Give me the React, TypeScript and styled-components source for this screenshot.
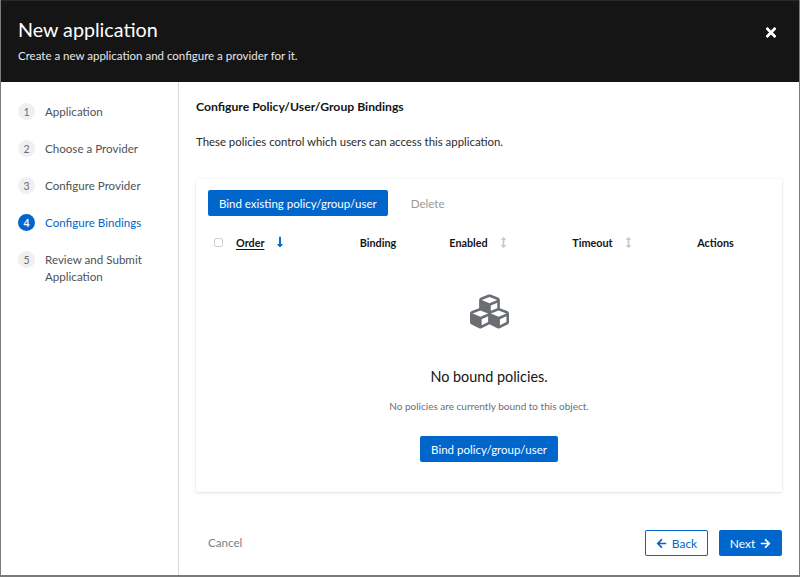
import React from "react";
import styled, { createGlobalStyle } from "styled-components";
import { FaArrowLeft, FaArrowRight, FaTimes, FaCubes, FaLongArrowAltDown, FaArrowsAltV } from "react-icons/fa";

const Global = createGlobalStyle`
  html, body { margin: 0; padding: 0; background: #fff; }
  #root { width: 800px; height: 577px; overflow: hidden; }
  * { box-sizing: border-box; }
  body { font-family: "Lato", "Liberation Sans", sans-serif; color: #151515; }
`;

const Modal = styled.div`
  width: 800px; height: 577px; display: flex; flex-direction: column;
  background: #fff; border: solid #7a7a7a; border-width: 0 1px 2px 1px;
`;
const Header = styled.header`
  height: 82px; flex: none; background: #151515; color: #fff; position: relative;
  padding: 17px 17px 0; border-top: 1px solid #2a2a2a;
`;
const Title = styled.h1`
  margin: 0; font-size: 19.7px; line-height: 24px; font-weight: 400;
`;
const Subtitle = styled.p`
  margin: 6px 0 0; font-size: 11.5px; line-height: 16px; color: #e8e8e8;
`;
const Close = styled.button`
  position: absolute; right: 21px; top: 24px; width: 14px; height: 14px; padding: 0;
  border: 0; background: none; color: #fff; display: flex; align-items: center; justify-content: center;
  font-size: 15px;
`;
const Body = styled.div`
  flex: 1; display: flex; min-height: 0;
`;
const Sidebar = styled.nav`
  width: 178px; flex: none; border-right: 1px solid #d9d9d9;
  padding: 21px 17px 0; display: flex; flex-direction: column; gap: 20px;
`;
const Step = styled.div`
  display: flex; gap: 10px; align-items: flex-start;
`;
const Num = styled.span<{ $active?: boolean }>`
  width: 17px; height: 17px; border-radius: 50%; flex: none; margin-right: 0;
  display: flex; align-items: center; justify-content: center; font-size: 10.5px;
  font-weight: ${p => (p.$active ? 700 : 400)};
  background: ${p => (p.$active ? "#0066cc" : "#f0f0f0")};
  color: ${p => (p.$active ? "#fff" : "#6a6e73")};
`;
const StepLabel = styled.span<{ $active?: boolean }>`
  font-size: 11.6px; line-height: 17px; color: ${p => (p.$active ? "#0066cc" : "#4f5255")};
`;
const Main = styled.main`
  flex: 1; min-width: 0; padding: 16px 17px 0; display: flex; flex-direction: column;
`;
const Heading = styled.h2`
  margin: 0; font-size: 12.2px; line-height: 17px; font-weight: 700;
`;
const Lead = styled.p`
  margin: 18px 0 0; font-size: 11.4px; line-height: 17px; color: #2b2b2b;
`;
const Card = styled.section`
  margin-top: 29px; height: 313px; background: #fff; border-radius: 2px;
  box-shadow: 0 1px 3px rgba(3,3,3,.12), 0 0 2px rgba(3,3,3,.05);
  display: flex; flex-direction: column;
`;
const Toolbar = styled.div`
  display: flex; align-items: center; gap: 0; padding: 11px 12px 0;
`;
const Button = styled.button`
  height: 26px; padding: 0 11px; border: 0; border-radius: 2px; background: #0066cc; color: #fff;
  font: 400 11.5px "Lato", "Liberation Sans", sans-serif; display: inline-flex; align-items: center;
  justify-content: center; gap: 5px;
`;
const GhostLabel = styled.span`
  font-size: 11.6px; color: #9a9a9a; margin-left: 23px;
`;
const TableHead = styled.div`
  display: grid; grid-template-columns: 131px 66px 136px 112px 1fr; height: 20px; margin-top: 16px;
  padding: 0 10px 0 18px; align-items: center; font-size: 10.8px; font-weight: 700;
`;
const Th = styled.div<{ $align?: string }>`
  display: flex; align-items: center; gap: 10px; justify-content: ${p => p.$align || "flex-start"};
`;
const Check = styled.span`
  width: 9px; height: 9px; border: 1px solid #cfcfcf; border-radius: 2px; margin-right: 3px; background: #fff; flex: none;
`;
const SortLabel = styled.span`
  text-decoration: underline; text-underline-offset: 2px;
`;
const Empty = styled.div`
  flex: 1; display: flex; flex-direction: column; align-items: center; padding-top: 42px;
  color: #6a6e73;
`;
const EmptyIcon = styled.div`
  font-size: 39px; line-height: 0; height: 35px; display: flex; align-items: center; color: #6a6e73;
`;
const EmptyTitle = styled.h3`
  margin: 38px 0 0; font-size: 14.4px; line-height: 20px; font-weight: 400; color: #151515;
`;
const EmptyText = styled.p`
  margin: 12px 0 0; font-size: 10px; line-height: 14px; color: #6a6e73;
`;
const EmptyAction = styled(Button)`
  margin-top: 23px;
`;
const Footer = styled.footer`
  display: flex; align-items: center; margin-top: 38px; padding-left: 12px;
`;
const Cancel = styled.span`
  font-size: 11.6px; color: #7d8084; padding-bottom: 2px;
`;
const Actions = styled.div`
  margin-left: auto; display: flex; gap: 11px;
`;
const NextButton = styled(Button)`
  width: 63px; padding: 0; font-size: 12px;
`;
const BackButton = styled(NextButton)`
  background: #fff; color: #0066cc; box-shadow: inset 0 0 0 1px #0066cc;
`;

const SortIdle = styled(FaArrowsAltV)`
  color: #c9c9c9; font-size: 11px;
`;
const SortActive = styled(FaLongArrowAltDown)`
  color: #0066cc; font-size: 12px;
`;

const steps = ["Application", "Choose a Provider", "Configure Provider", "Configure Bindings", "Review and Submit Application"];

export default function App() {
  return (
    <>
      <Global />
      <Modal>
        <Header>
          <Title>New application</Title>
          <Subtitle>Create a new application and configure a provider for it.</Subtitle>
          <Close aria-label="Close"><FaTimes /></Close>
        </Header>
        <Body>
          <Sidebar>
            {steps.map((s, i) => (
              <Step key={s}>
                <Num $active={i === 3}>{i + 1}</Num>
                <StepLabel $active={i === 3}>{s}</StepLabel>
              </Step>
            ))}
          </Sidebar>
          <Main>
            <Heading>Configure Policy/User/Group Bindings</Heading>
            <Lead>These policies control which users can access this application.</Lead>
            <Card>
              <Toolbar>
                <Button>Bind existing policy/group/user</Button>
                <GhostLabel>Delete</GhostLabel>
              </Toolbar>
              <TableHead>
                <Th><Check /><SortLabel>Order</SortLabel><SortActive /></Th>
                <Th $align="center">Binding</Th>
                <Th $align="center">Enabled<SortIdle /></Th>
                <Th $align="center">Timeout<SortIdle /></Th>
                <Th $align="center">Actions</Th>
              </TableHead>
              <Empty>
                <EmptyIcon><FaCubes /></EmptyIcon>
                <EmptyTitle>No bound policies.</EmptyTitle>
                <EmptyText>No policies are currently bound to this object.</EmptyText>
                <EmptyAction>Bind policy/group/user</EmptyAction>
              </Empty>
            </Card>
            <Footer>
              <Cancel>Cancel</Cancel>
              <Actions>
                <BackButton><FaArrowLeft size={11} />Back</BackButton>
                <NextButton>Next<FaArrowRight size={11} /></NextButton>
              </Actions>
            </Footer>
          </Main>
        </Body>
      </Modal>
    </>
  );
}
